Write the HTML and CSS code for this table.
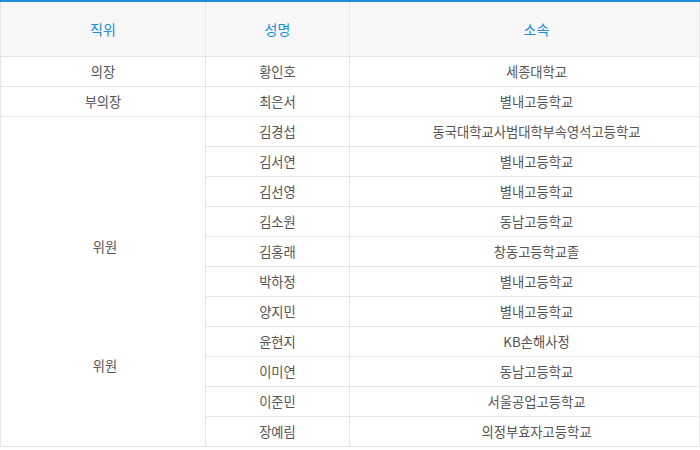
FILE: index.html
```html
<!DOCTYPE html>
<html lang="ko">
<head>
<meta charset="utf-8">
<link rel="stylesheet" href="styles.css">
</head>
<body>
<table class="members">
  <colgroup>
    <col class="c1"><col class="c2"><col class="c3">
  </colgroup>
  <thead>
    <tr><th>직위</th><th>성명</th><th class="org">소속</th></tr>
  </thead>
  <tbody>
    <tr><td>의장</td><td>황인호</td><td class="org">세종대학교</td></tr>
    <tr><td>부의장</td><td>최은서</td><td class="org">별내고등학교</td></tr>
    <tr>
      <td rowspan="11" class="merged">
        <div class="merged-inner"><span>위원</span><span>위원</span></div>
      </td>
      <td>김경섭</td><td class="org">동국대학교사범대학부속영석고등학교</td>
    </tr>
    <tr><td>김서연</td><td class="org">별내고등학교</td></tr>
    <tr><td>김선영</td><td class="org">별내고등학교</td></tr>
    <tr><td>김소원</td><td class="org">동남고등학교</td></tr>
    <tr><td>김홍래</td><td class="org">창동고등학교졸</td></tr>
    <tr><td>박하정</td><td class="org">별내고등학교</td></tr>
    <tr><td>양지민</td><td class="org">별내고등학교</td></tr>
    <tr><td>윤현지</td><td class="org">KB손해사정</td></tr>
    <tr><td>이미연</td><td class="org">동남고등학교</td></tr>
    <tr><td>이준민</td><td class="org">서울공업고등학교</td></tr>
    <tr><td>장예림</td><td class="org">의정부효자고등학교</td></tr>
  </tbody>
</table>
</body>
</html>
```
FILE: styles.css
```css
html, body {
  margin: 0;
  padding: 0;
  background: #fff;
}
body {
  font-family: "Noto Sans CJK KR", "Noto Sans", sans-serif;
}
.members {
  width: 699px;
  border-collapse: collapse;
  border-top: 2px solid #1a8fd8;
  table-layout: fixed;
  font-size: 13.3px;
  color: #555;
}
.c1 { width: 205px; }
.c2 { width: 144px; }
.c3 { width: 350px; }
.members th {
  height: 54px;
  padding: 0;
  background: #f7f7f7;
  color: #1a8fd8;
  font-weight: normal;
  font-size: 14px;
  border: 1px solid #e6e6e6;
  border-top: none;
}
.members td {
  height: 29px;
  padding: 0;
  text-align: center;
  line-height: 20px;
  border: 1px solid #e6e6e6;
}
.members .org {
  padding-left: 24px;
}
.members td.merged {
  vertical-align: top;
  padding-left: 4px;
}
.merged-inner {
  display: flex;
  flex-direction: column;
  align-items: center;
  padding-top: 120px;
  gap: 99px;
}
```
